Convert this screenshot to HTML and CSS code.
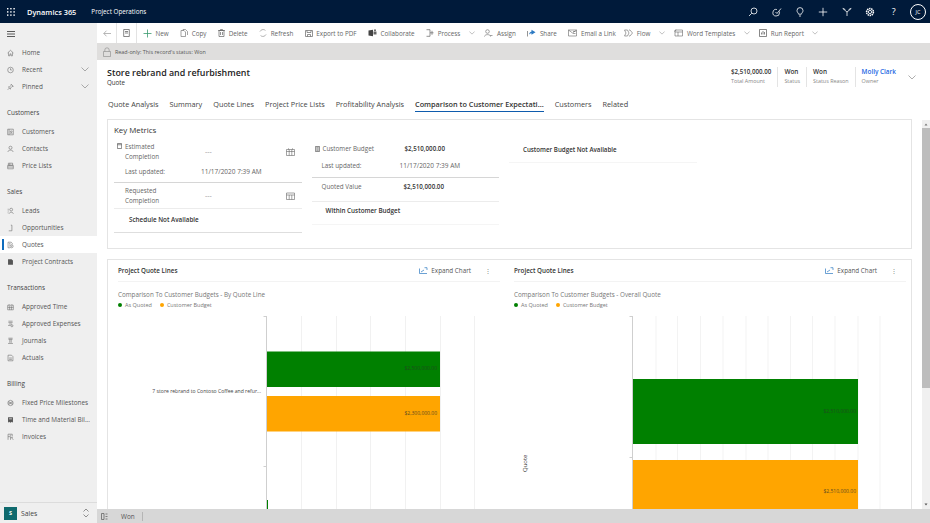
FILE: index.html
```html
<!DOCTYPE html>
<html lang="en">
<head>
<meta charset="utf-8">
<title>Store rebrand and refurbishment</title>
<link rel="stylesheet" href="styles.css">
</head>
<body>
<header class="topbar">
  <svg class="waffle" width="8" height="8" viewBox="0 0 9 9" fill="#fff"><rect x="0" y="0" width="1.6" height="1.6"/><rect x="3.6" y="0" width="1.6" height="1.6"/><rect x="7.2" y="0" width="1.6" height="1.6"/><rect x="0" y="3.6" width="1.6" height="1.6"/><rect x="3.6" y="3.6" width="1.6" height="1.6"/><rect x="7.2" y="3.6" width="1.6" height="1.6"/><rect x="0" y="7.2" width="1.6" height="1.6"/><rect x="3.6" y="7.2" width="1.6" height="1.6"/><rect x="7.2" y="7.2" width="1.6" height="1.6"/></svg>
  <span class="brand">Dynamics 365</span>
  <span class="app">Project Operations</span>
  <div class="top-icons">
    <svg width="10" height="10" viewBox="0 0 10 10" fill="none" stroke="#fff" stroke-width=".8"><circle cx="6" cy="4" r="3"/><path d="M3.800 6.200 1 9"/></svg>
    <svg width="10" height="10" viewBox="0 0 10 10" fill="none" stroke="#fff" stroke-width=".8"><path d="M7.500 4.500v1.200a3.300 3.300 0 1 1-2.600-3.200"/><path d="M3.500 5 5 6.500 9 1.500"/></svg>
    <svg width="10" height="10" viewBox="0 0 10 10" fill="none" stroke="#fff" stroke-width=".8"><path d="M3.600 7.200C3.500 6 2 5.400 2 3.600a3 3 0 0 1 6 0C8 5.400 6.500 6 6.400 7.200z"/><path d="M4 9h2"/></svg>
    <svg width="10" height="10" viewBox="0 0 10 10" fill="none" stroke="#fff" stroke-width=".8"><path d="M5 .8v8.400M.8 5h8.400"/></svg>
    <svg width="10" height="10" viewBox="0 0 10 10" fill="none" stroke="#fff" stroke-width=".8"><path d="M.8 1.500 5 5v4M9.200 1.500 5 5"/><path d="M.8 1.500c1 0 2 .5 2.500 1.500M9.200 1.500c-1 0-2 .5-2.500 1.500"/></svg>
    <svg width="10" height="10" viewBox="0 0 10 10" fill="none" stroke="#fff" stroke-width=".9"><circle cx="5" cy="5" r="1.600"/><circle cx="5" cy="5" r="3.400" stroke-dasharray="1.400 .7" stroke-width="1.600"/></svg>
    <span class="help">?</span>
    <span class="avatar">JC</span>
  </div>
</header>
<div class="shell">
  <nav class="sidebar">
    <div class="nav-scroll">
      <div class="nav-burger"><svg width="8" height="6" viewBox="0 0 8 6" stroke="#333" stroke-width=".8" fill="none"><path d="M0 .5h8M0 3h8M0 5.500h8"/></svg></div>
      <a class="nav-item"><svg class="ni" viewBox="0 0 10 10"><path d="M.8 5 5 1.200 9.200 5M2.200 4.200V9h2V6.300h1.600V9h2V4.200"/></svg><span>Home</span></a>
      <a class="nav-item"><svg class="ni" viewBox="0 0 10 10"><circle cx="5" cy="5" r="4"/><path d="M5 2.500V5h2"/></svg><span>Recent</span><svg class="chev" viewBox="0 0 8 5"><path d="M.5.500 4 4 7.500.5"/></svg></a>
      <a class="nav-item"><svg class="ni" viewBox="0 0 10 10"><path d="M6 1 9 4 7 4.500 5 6.500 5 8 2 5 3.500 5 5.500 3zM3.500 6.500 1 9"/></svg><span>Pinned</span><svg class="chev" viewBox="0 0 8 5"><path d="M.5.500 4 4 7.500.5"/></svg></a>
      <div class="nav-head">Customers</div>
      <a class="nav-item"><svg class="ni" viewBox="0 0 10 10"><path d="M1 1h8v8H1zM3 1v8"/><circle cx="6" cy="4.500" r="1.200"/><path d="M4.500 7.500c.3-1.500 2.700-1.500 3 0"/></svg><span>Customers</span></a>
      <a class="nav-item"><svg class="ni" viewBox="0 0 10 10"><circle cx="5" cy="3.200" r="2.200"/><path d="M1.200 9.200c.4-3.400 7.200-3.400 7.600 0"/></svg><span>Contacts</span></a>
      <a class="nav-item"><svg class="ni" viewBox="0 0 10 10"><path d="M2 1h6v3H2zM1 4h8v5H1zM1 6.500h8M4 1v3"/></svg><span>Price Lists</span></a>
      <div class="nav-head">Sales</div>
      <a class="nav-item"><svg class="ni" viewBox="0 0 10 10"><circle cx="6" cy="3" r="2"/><path d="M3 9c.3-3 5.700-3 6 0M1 2.500h1.500M1 5h1.500M1 7.500h1"/></svg><span>Leads</span></a>
      <a class="nav-item"><svg class="ni" viewBox="0 0 10 10"><path d="M7 1v8H2.500M5.500 1H7"/></svg><span>Opportunities</span></a>
      <a class="nav-item is-active"><svg class="ni" viewBox="0 0 10 10"><path d="M1.500 1v8h3M1.500 1H6l1.500 1.500V4"/><circle cx="6.500" cy="6.800" r="2.200"/><path d="M6.500 5.800v2M3 3h2M3 5h1.500"/></svg><span>Quotes</span></a>
      <a class="nav-item"><svg class="ni ni-solid" viewBox="0 0 10 10"><path d="M1.500 1h5L8.500 3v6h-7zM3 5.500h4v1H3z"/></svg><span>Project Contracts</span></a>
      <div class="nav-head">Transactions</div>
      <a class="nav-item"><svg class="ni" viewBox="0 0 10 10"><path d="M1 2.500h8M1 2.500V9h8V2.500M3 1v1.500M7 1v1.500M3.700 4v5M6.300 4v5M1 5.500h8"/></svg><span>Approved Time</span></a>
      <a class="nav-item"><svg class="ni" viewBox="0 0 10 10"><path d="M2 1h6M2 3h6M3 5h4M1.500 7H5"/><circle cx="7" cy="7.500" r="1.500"/></svg><span>Approved Expenses</span></a>
      <a class="nav-item"><svg class="ni" viewBox="0 0 10 10"><path d="M2 1h6M2 2.500h6M4 2.500v5M6 2.500v5M1.500 8.500h7"/></svg><span>Journals</span></a>
      <a class="nav-item"><svg class="ni" viewBox="0 0 10 10"><path d="M1.500 1h5l2 2v6h-7zM3 5h4M3 7h4"/></svg><span>Actuals</span></a>
      <div class="nav-head">Billing</div>
      <a class="nav-item"><svg class="ni" viewBox="0 0 10 10"><circle cx="5" cy="5" r="3.800"/><path d="M2.500 2.500l5 5M2.500 7.500l5-5M1.500 5h7"/></svg><span>Fixed Price Milestones</span></a>
      <a class="nav-item"><svg class="ni ni-solid" viewBox="0 0 10 10"><path d="M1.500 1h7v8L7 7.500 5 9 3 7.500 1.500 9zM3 3v1h4V3z"/></svg><span>Time and Material Bil...</span></a>
      <a class="nav-item"><svg class="ni" viewBox="0 0 10 10"><path d="M1.500 9V1h6v3M1.500 4.500H5V9M6 5.500 9 9M6 5.500h2.500M4 2.500h2"/></svg><span>Invoices</span></a>
    </div>
    <div class="area-switch">
      <span class="area-badge">S</span><span class="area-name">Sales</span>
      <svg class="area-arrows" width="6" height="10" viewBox="0 0 6 10" fill="none" stroke="#666" stroke-width=".7"><path d="M.5 3.500 3 1l2.500 2.500M.5 6.500 3 9l2.500-2.500"/></svg>
    </div>
  </nav>
  <main class="content">
    <div class="cmdbar">
      <span class="cmd-back"><svg width="8" height="7" viewBox="0 0 8 7" fill="none" stroke="#999" stroke-width=".7"><path d="M8 3.500H.8M3.500.7.800 3.500l2.700 2.800"/></svg></span>
      <span class="cmd-form"><svg width="7" height="8" viewBox="0 0 7 8" fill="none" stroke="#555" stroke-width=".7"><path d="M.7.500h5.600v7H.7zM2 2.500h3M2 4h3"/></svg></span>
      <div class="cmds">
        <span class="cmd cmd-new"><svg width="9" height="9" viewBox="0 0 9 9" fill="none" stroke="#3a9a6e" stroke-width=".8"><path d="M4.500.5v8M.5 4.500h8"/></svg>New</span>
        <span class="cmd"><svg width="8" height="8" viewBox="0 0 8 8" fill="none" stroke="#666" stroke-width=".6"><path d="M1 7.500V1.500h3l1.500 1.500v4.500zM3 1.500V.5h2.500L7.500 2.500V6"/></svg>Copy</span>
        <span class="cmd"><svg width="7" height="8" viewBox="0 0 7 8" fill="none" stroke="#666" stroke-width=".7"><path d="M1 1.500h5v6H1zM0 1.500h7M2.500 1.500V.5h2v1M2.500 3v3M4.500 3v3"/></svg>Delete</span>
        <span class="cmd"><svg width="8" height="8" viewBox="0 0 8 8" fill="none" stroke="#666" stroke-width=".6"><path d="M1 2.500A3.500 3.500 0 0 1 6.500 1.500M7 5.500A3.500 3.500 0 0 1 1.500 6.500" stroke-dasharray="1.500 .4"/></svg>Refresh</span>
        <span class="cmd"><svg width="8" height="8" viewBox="0 0 8 8" fill="none" stroke="#666" stroke-width=".7"><path d="M.5 1.500h7v6h-7zM2 1.500v2h4v-2M2.500 7.500v-2h3v2"/></svg>Export to PDF</span>
        <span class="cmd"><svg width="9" height="8" viewBox="0 0 9 8"><path fill="#444" d="M.5 1.500 5 .7v6.600L.5 6.500z"/><path fill="#666" d="M5.500 2.500h3v3h-3z"/><circle cx="7" cy="1.300" r="1" fill="#666"/></svg>Collaborate</span>
        <span class="cmd"><svg width="8" height="8" viewBox="0 0 8 8" fill="none" stroke="#666" stroke-width=".7"><path d="M.5.700H4v6.600H.5M4 3.800h3.500M6 1.800v4"/></svg>Process<svg class="cmd-chev" viewBox="0 0 8 5"><path d="M.5.500 4 4 7.500.5"/></svg></span>
        <span class="cmd"><svg width="9" height="8" viewBox="0 0 9 8" fill="none" stroke="#666" stroke-width=".6"><circle cx="3.500" cy="2.500" r="1.800"/><path d="M.5 7.500c.3-2.500 5.700-2.500 6 0M6 6.500h2.500"/></svg>Assign</span>
        <span class="cmd"><svg width="9" height="8" viewBox="0 0 9 8"><path fill="#2b79c2" d="M4.500.7 8.500 3.300 4.500 5.700V4.200C3 4.200 2.300 5 2 6c0-2 1-3.300 2.500-3.600z"/><path d="M.5 2v5.500" stroke="#666" stroke-width=".7"/></svg>Share</span>
        <span class="cmd"><svg width="9" height="8" viewBox="0 0 9 8" fill="none" stroke="#666" stroke-width=".6"><path d="M.5 1h8v6h-8zM.5 1l4 3 4-3M5 2.500h2.500M5 4.500h2.500"/></svg>Email a Link</span>
        <span class="cmd cmd-flow"><svg width="9" height="8" viewBox="0 0 9 8" fill="none" stroke="#666" stroke-width=".6"><path d="M.5 1h3l1.500 3-1.500 3h-3L2 4zM5 1h1l2.500 3L6 7H5"/></svg>Flow<svg class="cmd-chev" viewBox="0 0 8 5"><path d="M.5.500 4 4 7.500.5"/></svg></span>
        <span class="cmd"><svg width="9" height="8" viewBox="0 0 9 8" fill="none" stroke="#666" stroke-width=".6"><path d="M1 1h7.500v6H1zM1 3h7.500M4 3v4M.3 2.500l2-1.500"/></svg>Word Templates<svg class="cmd-chev" viewBox="0 0 8 5"><path d="M.5.500 4 4 7.500.5"/></svg></span>
        <span class="cmd"><svg width="8" height="8" viewBox="0 0 8 8" fill="none" stroke="#555" stroke-width=".7"><path d="M.5.500h7v7h-7zM2.500 5.500V3.500M4 5.500V2M5.500 5.500V3"/></svg>Run Report<svg class="cmd-chev" viewBox="0 0 8 5"><path d="M.5.500 4 4 7.500.5"/></svg></span>
      </div>
    </div>
    <div class="notice">
      <svg width="8" height="10" viewBox="0 0 8 10" fill="none" stroke="#888" stroke-width=".6"><path d="M.5 4.500h7v5h-7zM1.800 4.500V3a2.200 2.200 0 0 1 4.400 0v1.500"/></svg>
      <span>Read-only: This record's status: Won</span>
    </div>
    <section class="rec-head">
      <div class="rec-title">
        <h1>Store rebrand and refurbishment</h1>
        <p>Quote</p>
      </div>
      <div class="rec-fields">
        <div class="field field-amount"><b>$2,510,000.00</b><small>Total Amount</small></div>
        <div class="field"><b>Won</b><small>Status</small></div>
        <div class="field"><b>Won</b><small>Status Reason</small></div>
        <div class="field field-owner"><b>Molly Clark</b><small>Owner</small></div>
        <svg class="rec-chev" viewBox="0 0 8 5"><path d="M.5.500 4 4 7.500.5"/></svg>
      </div>
    </section>
    <div class="tabs">
      <span>Quote Analysis</span>
      <span>Summary</span>
      <span>Quote Lines</span>
      <span>Project Price Lists</span>
      <span>Profitability Analysis</span>
      <span class="tab-on">Comparison to Customer Expectati...</span>
      <span>Customers</span>
      <span>Related</span>
    </div>
    <div class="scroller">
      <div class="cards">
        <section class="card metrics">
          <h2>Key Metrics</h2>
          <div class="metric-cols">
            <div class="mcol">
              <div class="mrow h26">
                <svg class="mi mi-top" viewBox="0 0 6 7" fill="none" stroke="#555" stroke-width=".8"><path d="M.5.500h5v6h-5zM.5 2h5"/></svg>
                <span class="mlabel">Estimated<br>Completion</span><span class="mdash">---</span>
                <svg class="cal" viewBox="0 0 9 8" fill="none" stroke="#666" stroke-width=".6"><path d="M.5 1.500h8v6h-8zM.5 3.500h8M3.200 1.500v6M5.800 1.500v6M2.500.3v1.200M6.500.3v1.200"/></svg>
              </div>
              <div class="mrow h18 strong-line pb4 indent"><span class="mlabel">Last updated:</span><span class="mval-date">11/17/2020 7:39 AM</span></div>
              <div class="mrow h26 soft-line indent"><span class="mlabel">Requested<br>Completion</span><span class="mdash">---</span>
                <svg class="cal" viewBox="0 0 9 8" fill="none" stroke="#666" stroke-width=".6"><path d="M.5 1h8v6.500h-8zM.5 3h8M3.200 3v4.500M5.800 3v4.500"/></svg>
              </div>
              <div class="mrow h24 strong-soft pb1"><b class="msum">Schedule Not Available</b></div>
            </div>
            <div class="mcol">
              <div class="mrow h19">
                <svg class="mi" viewBox="0 0 6 7" fill="none" stroke="#555" stroke-width=".8"><path d="M.5.500h5v6h-5zM1.500 2h3M1.500 3.500h3M1.500 5h3"/></svg>
                <span class="mlabel l2">Customer Budget</span><b class="mval">$2,510,000.00</b>
              </div>
              <div class="mrow h20 strong-line pb3 indent2"><span class="mlabel l2">Last updated:</span><span class="mval-date2">11/17/2020 7:39 AM</span></div>
              <div class="mrow h24 soft-line pb6 indent2"><span class="mlabel l2">Quoted Value</span><b class="mval">$2,510,000.00</b></div>
              <div class="mrow h23 faint-line pb5"><b class="msum2">Within Customer Budget</b></div>
            </div>
            <div class="mcol">
              <div class="mrow h24 faint-line pb2"><b class="msum3">Customer Budget Not Available</b></div>
            </div>
          </div>
        </section>
        <section class="card charts">
          <article class="chart chart-left">
            <div class="chart-head">
              <b>Project Quote Lines</b>
              <span class="expand"><svg width="9" height="7" viewBox="0 0 9 7" fill="none" stroke="#2b79c2" stroke-width=".7"><path d="M.5 1.500v5h7.500M2 5 5 3M5.500 .7h2.500v2.300" /></svg>Expand Chart</span>
              <span class="kebab">⋮</span>
            </div>
            <div class="chart-sub">Comparison To Customer Budgets - By Quote Line</div>
            <div class="legend"><i class="dot green"></i>As Quoted<i class="dot amber"></i>Customer Budget</div>
            <svg class="plot" width="397" height="199" viewBox="108 310 397 199">
              <g stroke="#f1f1f1"><path d="M301.500 316V509M336.500 316V509M370.500 316V509M405.500 316V509M440.500 316V509M474.500 316V509"/></g>
              <path d="M266.500 316V509M263.500 316.500H266M263.500 466.500H266" stroke="#cfcfcf" fill="none"/>
              <rect x="267" y="351.500" width="173" height="35.500" fill="#008000"/>
              <rect x="267" y="396" width="173" height="35.500" fill="#ffa500"/>
              <rect x="267" y="500" width="1" height="9" fill="#008000"/>
              <text x="437" y="370" text-anchor="end" class="bar-label dark">$2,500,000.00</text>
              <text x="437" y="415" text-anchor="end" class="bar-label">$2,300,000.00</text>
              <text x="261" y="392.500" text-anchor="end" class="cat-label">7 store rebrand to Contoso Coffee and refur...</text>
            </svg>
          </article>
          <article class="chart chart-right">
            <div class="chart-head">
              <b>Project Quote Lines</b>
              <span class="expand"><svg width="9" height="7" viewBox="0 0 9 7" fill="none" stroke="#2b79c2" stroke-width=".7"><path d="M.5 1.500v5h7.500M2 5 5 3M5.500 .7h2.500v2.300" /></svg>Expand Chart</span>
              <span class="kebab">⋮</span>
            </div>
            <div class="chart-sub">Comparison To Customer Budgets - Overall Quote</div>
            <div class="legend"><i class="dot green"></i>As Quoted<i class="dot amber"></i>Customer Budget</div>
            <svg class="plot" width="405" height="199" viewBox="505 310 405 199">
              <g stroke="#f3f3f3"><path d="M656 316V509M677.500 316V509M700.500 316V509M723 316V509M746 316V509M768 316V509M790.500 316V509M812.500 316V509M835 316V509M858 316V509M880 316V509"/></g>
              <path d="M632.500 316V509M629.500 316.500H632M629.500 457.500H632" stroke="#cfcfcf" fill="none"/>
              <rect x="633" y="379" width="225" height="65" fill="#008000"/>
              <rect x="633" y="460" width="225" height="49" fill="#ffa500"/>
              <text x="856" y="413" text-anchor="end" class="bar-label dark">$2,510,000.00</text>
              <text x="856" y="493" text-anchor="end" class="bar-label">$2,510,000.00</text>
              <text transform="translate(527 472) rotate(-90)" class="axis-label">Quote</text>
            </svg>
          </article>
        </section>
      </div>
      <div class="vscroll">
        <svg class="sb-arrow" width="4" height="3" viewBox="0 0 4 3" fill="#777"><path d="M2 .5 3.500 2.500H.5z"/></svg>
        <div class="sb-thumb"></div>
        <svg class="sb-arrow sb-down" width="4" height="3" viewBox="0 0 4 3" fill="#555"><path d="M2 2.500 3.500.5H.5z"/></svg>
      </div>
    </div>
    <footer class="status">
      <svg width="7" height="7" viewBox="0 0 7 7" fill="none" stroke="#666" stroke-width=".8"><path d="M.5.500h2.500v6H.5zM4.500 1h2M4.500 3.500h2M4.500 6h2"/></svg>
      <span class="status-txt">Won</span>
      <span class="status-sep"></span>
    </footer>
  </main>
</div>
</body>
</html>
```
FILE: styles.css
```css
* { box-sizing: border-box; }
html, body { margin: 0; padding: 0; }
body {
  width: 930px; height: 523px; overflow: hidden;
  font-family: "Open Sans", "Noto Sans", sans-serif;
  font-size: 7px; color: #444; background: #fff;
  display: flex; flex-direction: column;
}
h1, h2, p { margin: 0; }
svg { display: block; flex: none; }

.topbar {
  height: 23px; flex: none; background: #001a3a; color: #fff;
  display: flex; align-items: center; padding-left: 7px;
}
.brand { margin-left: 12px; font-size: 7.400px; font-weight: 600; }
.app { margin-left: 15px; font-size: 6.300px; }
.top-icons { margin-left: auto; display: flex; align-items: center; gap: 13.400px; padding-right: 4px; }
.help { width: 10px; text-align: center; font-size: 9px; }
.avatar {
  width: 16px; height: 16px; border: 1px solid #fff; border-radius: 50%;
  font-size: 5.500px; display: flex; align-items: center; justify-content: center; margin-left: -2px;
}

.shell { flex: 1; min-height: 0; display: flex; }
.sidebar {
  width: 97px; flex: none; background: #efefef; display: flex; flex-direction: column;
  color: #555; font-size: 6.400px;
}
.nav-scroll { flex: 1; min-height: 0; }
.nav-burger { height: 21px; padding-left: 7px; display: flex; align-items: center; }
.nav-item {
  height: 17px; display: flex; align-items: center; padding-left: 7px; position: relative;
}
.nav-item span { margin-left: 8px; white-space: nowrap; }
.ni { width: 7px; height: 8px; fill: none; stroke: #666; stroke-width: .8; }
.ni-solid { fill: #555; stroke: none; }
.chev { width: 8px; height: 5px; margin-left: auto; margin-right: 8px; fill: none; stroke: #777; stroke-width: .6; }
.is-active { background: #fff; }
.is-active::before {
  content: ""; position: absolute; left: 2px; top: 3px; bottom: 3px; width: 2px; background: #0f6cbd;
}
.nav-head {
  height: 28px; padding: 12px 0 0 7px; line-height: 11px; font-size: 6.400px; color: #444;
}
.area-switch {
  height: 21px; flex: none; border-top: 1px solid #dcdcdc; padding-left: 4px;
  display: flex; align-items: center;
}
.area-badge {
  width: 13px; height: 13px; background: #0f6a6e; color: #fff; font-size: 5.500px; font-weight: 700;
  display: flex; align-items: center; justify-content: center;
}
.area-name { margin-left: 4px; font-size: 6.800px; color: #444; }
.area-arrows { margin-left: auto; margin-right: 8px; }

.content { flex: 1; min-width: 0; display: flex; flex-direction: column; }
.cmdbar { height: 20px; flex: none; display: flex; align-items: stretch; color: #666; font-size: 6.300px; }
.cmd-back { width: 20px; display: flex; align-items: center; justify-content: center; border-right: 1px solid #e3e3e3; }
.cmd-form { width: 20px; display: flex; align-items: center; justify-content: center; border-right: 1px solid #e3e3e3; }
.cmds { display: flex; align-items: center; padding-left: 6px; gap: 11.600px; white-space: nowrap; }
.cmd { display: flex; align-items: center; gap: 3.500px; }
.cmd-flow { margin-left: -3px; }
.cmd-chev { width: 6px; height: 4px; margin-left: 5px; margin-right: -2px; fill: none; stroke: #888; stroke-width: .7; }
.notice {
  height: 17px; flex: none; background: #dfdedd; display: flex; align-items: center; gap: 4px;
  padding-left: 6px; font-size: 5.400px; color: #555;
}
.rec-head { height: 33px; flex: none; display: flex; justify-content: space-between; padding: 7px 0 0 10px; }
.rec-title h1 { font-size: 8.900px; line-height: 11px; font-weight: 600; color: #222; }
.rec-title p { font-size: 6.200px; line-height: 10px; color: #333; }
.rec-fields { display: flex; align-items: flex-start; }
.field { display: flex; flex-direction: column; padding: 0 6px; border-left: 1px solid #e4e4e4; height: 20px; }
.field:first-child { border-left: 0; }
.field b { font-size: 6.400px; line-height: 10px; font-weight: 600; color: #333; }
.field small { font-size: 5.400px; line-height: 8px; color: #888; }
.field-amount b { font-size: 6.200px; }
.field-owner b { color: #2266e3; }
.rec-chev { width: 8px; height: 5px; margin: 8px 14px 0 6px; fill: none; stroke: #777; stroke-width: .6; }

.tabs {
  height: 26px; flex: none; display: flex; gap: 11px; padding: 6px 0 0 11px; font-size: 7.300px; color: #444;
  white-space: nowrap; align-items: flex-start;
}
.tabs span { line-height: 11px; padding-bottom: 1px; }
.tab-on { font-weight: 600; color: #333; border-bottom: 1px solid #0f5cad; }

.scroller { flex: 1; min-height: 0; display: flex; overflow: hidden; }
.cards { width: 805px; margin-left: 10px; flex: none; display: flex; flex-direction: column; gap: 10px; }
.card { border: 1px solid #e4e4e4; background: #fff; flex: none; }
.metrics { height: 130px; padding: 4px 6px 0; }
.metrics h2 { font-size: 7.900px; line-height: 12px; font-weight: 400; color: #333; height: 15px; }
.metric-cols { display: flex; gap: 10px; }
.mcol { width: 187.500px; }
.mrow { display: flex; align-items: center; position: relative; line-height: 10px; }
.mlabel { color: #666; font-size: 6.300px; width: 78px; margin-left: 3px; flex: none; }
.l2 { width: 79px; }
.mi { width: 5px; height: 6px; margin-left: 3px; flex: none; }
.mi-top { align-self: flex-start; margin-top: 4px; }
.indent { padding-left: 8px; }
.indent2 { padding-left: 7px; }
.h18 { height: 18px; } .h19 { height: 19px; } .h20 { height: 20px; } .h23 { height: 23px; } .h24 { height: 24px; } .h26 { height: 26px; }
.pb6 { padding-bottom: 6px; } .pb5 { padding-bottom: 5px; } .pb4 { padding-bottom: 4px; } .pb3 { padding-bottom: 3px; } .pb2 { padding-bottom: 2px; } .pb1 { padding-bottom: 1px; }
.strong-line { border-bottom: 1px solid #d6d6d6; }
.soft-line { border-bottom: 1px solid #ececec; }
.faint-line { border-bottom: 1px solid #f5f5f5; }
.strong-soft { border-bottom: 1px solid #dedede; }
.mdash { margin-left: 2px; color: #999; }
.cal { width: 9px; height: 8px; margin-left: auto; margin-right: 7px; }
.mval-date { color: #666; font-size: 6.500px; margin-left: -2px; }
.mval-date2 { color: #666; font-size: 6.500px; margin-left: -1px; }
.mval { font-size: 6.200px; font-weight: 600; color: #333; margin-left: 3px; }
.msum { margin-left: 15px; font-size: 6.300px; font-weight: 600; color: #333; }
.msum2 { margin-left: 14px; font-size: 6.300px; font-weight: 600; color: #333; }
.msum3 { margin-left: 14px; font-size: 6.200px; font-weight: 600; color: #333; }

.charts { height: 300px; display: flex; padding-left: 0; }
.chart-left { width: 397px; }
.chart-right { width: 406px; }
.chart-head {
  height: 22px; display: flex; align-items: center; margin-left: 10px; border-bottom: 1px solid #f3f3f3;
  font-size: 6.300px; color: #333;
}
.chart-left .chart-head { margin-right: 5px; }
.chart-right .chart-head { margin-left: 9px; margin-right: 5px; }
.chart-head b { font-weight: 600; }
.expand { margin-left: auto; display: flex; align-items: center; gap: 3px; color: #555; }
.kebab { width: 10px; margin: 0 7px 0 12px; text-align: center; color: #777; }
.chart-sub { margin: 8px 0 0 10px; font-size: 6.300px; line-height: 10px; color: #777; }
.chart-right .chart-sub, .chart-right .legend { margin-left: 9px; }
.legend { margin: 0 0 0 10px; font-size: 5.500px; line-height: 10px; color: #777; display: flex; align-items: center; }
.dot { width: 4px; height: 4px; border-radius: 50%; margin-right: 3px; }
.dot.amber { margin-left: 8px; background: #ffa500; }
.dot.green { background: #008000; }
.plot { margin-top: 0; }
.bar-label { font-family: "Open Sans", sans-serif; font-size: 5px; fill: #5a4a20; }
.bar-label.dark { fill: #1d4d1d; }
.cat-label { font-family: "Open Sans", sans-serif; font-size: 5.100px; fill: #444; }
.axis-label { font-family: "Open Sans", sans-serif; font-size: 6px; fill: #444; }

.vscroll {
  width: 8px; margin-left: auto; margin-top: 1px; background: #f0f0f0; display: flex; flex-direction: column; align-items: center;
}
.sb-arrow { margin-top: 3px; }
.sb-thumb { width: 8px; height: 260px; background: #bdbdbd; margin-top: 2px; }
.sb-down { margin-top: auto; margin-bottom: 3px; }

.status {
  height: 14px; flex: none; background: #d7d7d7; display: flex; align-items: center; padding-left: 4px; font-size: 6.400px; color: #555;
}
.status-txt { margin-left: 13px; }
.status-sep { width: 1px; height: 9px; background: #b5b5b5; margin-left: 7px; }
```
